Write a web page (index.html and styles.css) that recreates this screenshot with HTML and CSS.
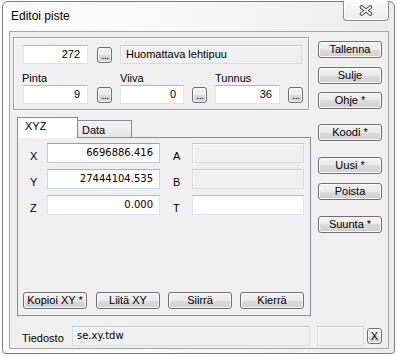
FILE: index.html
```html
<!DOCTYPE html>
<html>
<head>
<meta charset="utf-8">
<link rel="stylesheet" href="styles.css">
</head>
<body>
<div class="window">
  <div class="titlebar">
    <span class="title">Editoi piste</span>
    <div class="close">
      <svg width="14" height="11" viewBox="0 0 14 11">
        <path d="M2.5 2 L11.5 9 M11.5 2 L2.5 9" stroke="#4a4a4a" stroke-width="3.6" stroke-linecap="round" fill="none"/>
        <path d="M2.5 2 L11.5 9 M11.5 2 L2.5 9" stroke="#ffffff" stroke-width="1.6" stroke-linecap="round" fill="none"/>
      </svg>
    </div>
  </div>
  <div class="client">
    <div class="main">
      <div class="leftcol">
        <div class="groupbox">
          <div class="row1">
            <div class="input num w65">272</div>
            <div class="btn dots">...</div>
            <div class="input ro wide">Huomattava lehtipuu</div>
          </div>
          <div class="row2">
            <div class="fld">
              <span class="lbl shift">Pinta</span>
              <div class="fldrow"><div class="input num w65">9</div><div class="btn dots g9">...</div></div>
            </div>
            <div class="fld">
              <span class="lbl">Viiva</span>
              <div class="fldrow"><div class="input num w64">0</div><div class="btn dots g8">...</div></div>
            </div>
            <div class="fld">
              <span class="lbl">Tunnus</span>
              <div class="fldrow"><div class="input num w65">36</div><div class="btn dots g8">...</div></div>
            </div>
          </div>
        </div>
        <div class="tabs">
          <div class="tab active">XYZ</div>
          <div class="tab">Data</div>
        </div>
        <div class="panel">
          <div class="crow">
            <span class="clbl">X</span>
            <div class="input val cin focus">6696886.416</div>
            <span class="clbl clbl2">A</span>
            <div class="input ro cro"></div>
          </div>
          <div class="crow">
            <span class="clbl">Y</span>
            <div class="input val cin hover">27444104.535</div>
            <span class="clbl clbl2">B</span>
            <div class="input ro cro"></div>
          </div>
          <div class="crow">
            <span class="clbl">Z</span>
            <div class="input val cin">0.000</div>
            <span class="clbl clbl2">T</span>
            <div class="input cro"></div>
          </div>
          <div class="pbtns">
            <div class="btn pb">Kopioi XY *</div>
            <div class="btn pb g9">Liitä XY</div>
            <div class="btn pb g8">Siirrä</div>
            <div class="btn pb g8">Kierrä</div>
          </div>
        </div>
      </div>
      <div class="rightcol">
        <div class="btn rb m1">Tallenna</div>
        <div class="btn rb m2">Sulje</div>
        <div class="btn rb m3">Ohje *</div>
        <div class="btn rb m4">Koodi *</div>
        <div class="btn rb m5">Uusi *</div>
        <div class="btn rb m6">Poista</div>
        <div class="btn rb m7">Suunta *</div>
      </div>
    </div>
    <div class="footer">
      <span class="flbl">Tiedosto</span>
      <div class="input ro val file">se.xy.tdw</div>
      <div class="input ro file2"></div>
      <div class="btn xbtn">X</div>
    </div>
  </div>
</div>
</body>
</html>
```

FILE: styles.css
```css
html, body {
  margin: 0;
  padding: 0;
}
body {
  width: 397px;
  height: 358px;
  overflow: hidden;
  background: #ffffff;
  font-family: "Liberation Sans", Arial, sans-serif;
  font-size: 11px;
  color: #000;
}
.window {
  margin: 1px 0 0 2px;
  width: 393px;
  height: 353px;
  box-sizing: border-box;
  border: 1px solid #7d7d7d;
  border-radius: 6px 6px 4px 4px;
  background: linear-gradient(to right, #fdfdfd 0%, #f6f6f6 60%, #ececec 100%);
  display: flex;
  flex-direction: column;
}
.titlebar {
  height: 29px;
  display: flex;
  justify-content: space-between;
  align-items: flex-start;
  flex: none;
}
.title {
  font-size: 12px;
  line-height: 29px;
  padding-left: 8px;
}
.close {
  width: 46px;
  height: 20px;
  box-sizing: border-box;
  margin: -1px 5px 0 0;
  border: 1px solid #8a8a8a;
  border-top: none;
  border-radius: 0 0 4px 4px;
  background: linear-gradient(#fbfbfb, #ececec);
  box-shadow: inset 0 0 0 1px #ffffff;
  display: flex;
  align-items: center;
  justify-content: center;
}
.close svg { display: block; }
.client {
  flex: 1;
  margin: 0 5px 4px 6px;
  border: 1px solid #a8a8a8;
  background: #f0f0f0;
  display: flex;
  flex-direction: column;
}
.main {
  display: flex;
  padding: 5px 0 0 3px;
}
.leftcol {
  width: 298px;
  display: flex;
  flex-direction: column;
}
.groupbox {
  width: 296px;
  height: 73px;
  box-sizing: border-box;
  border: 1px solid #a0a0a0;
  box-shadow: inset 1px 1px 0 #ffffff, 1px 1px 0 #ffffff;
  padding: 7px 0 0 9px;
}
.input {
  box-sizing: border-box;
  height: 19px;
  background: #ffffff;
  border: 1px solid #e2e3ea;
  border-top-color: #b5b7be;
  line-height: 17px;
  padding: 0 4px;
  white-space: nowrap;
  overflow: hidden;
  flex: none;
}
.num { text-align: right; padding-right: 7px; }
.ro {
  background: #f0f0f0;
  border-color: #dcdcdc;
  border-top-color: #c8c8c8;
  box-shadow: inset 1px 1px 0 #fafafa;
}
.w65 { width: 65px; }
.w64 { width: 64px; }
.wide { width: 182px; padding-left: 5px; }
.row1 {
  display: flex;
  align-items: center;
  height: 19px;
}
.row1 .dots { margin: 0 8px 0 9px; }
.btn {
  box-sizing: border-box;
  border: 1px solid #707070;
  border-radius: 3px;
  background: linear-gradient(#f2f2f2 0%, #ebebeb 50%, #dddddd 50%, #cfcfcf 100%);
  box-shadow: inset 0 0 0 1px #fbfbfb;
  text-align: center;
  white-space: nowrap;
  flex: none;
}
.dots {
  width: 15px;
  height: 16px;
  line-height: 15px;
  font-size: 11px;
  letter-spacing: -0.5px;
  padding-left: 1px;
}
.row2 {
  display: flex;
  margin-top: 8px;
}
.fld {
  display: flex;
  flex-direction: column;
  margin-right: 8px;
}
.lbl {
  line-height: 13px;
  height: 13px;
}
.lbl.shift { margin-left: -1px; }
.fldrow {
  display: flex;
  align-items: center;
  height: 19px;
}
.g9 { margin-left: 9px; }
.g8 { margin-left: 8px; }
.tabs {
  display: flex;
  align-items: flex-end;
  height: 20px;
  margin-top: 7px;
  padding-left: 4px;
}
.tab {
  box-sizing: border-box;
  width: 54px;
  height: 17px;
  border: 1px solid #898c95;
  border-bottom: none;
  border-left: none;
  background: linear-gradient(#f3f3f3, #e6e6e6);
  padding-left: 4px;
  line-height: 18px;
}
.tab.active {
  width: 61px;
  height: 21px;
  border-left: 1px solid #898c95;
  background: #ffffff;
  margin-bottom: -1px;
  position: relative;
  z-index: 1;
  padding-left: 7px;
  line-height: 17px;
}
.panel {
  margin-left: 4px;
  width: 294px;
  height: 179px;
  box-sizing: border-box;
  border: 1px solid #898c95;
  background: #f0f0f0;
  padding: 5px 0 6px 5px;
  display: flex;
  flex-direction: column;
}
.crow {
  display: flex;
  height: 20px;
  margin-bottom: 6px;
  padding-left: 7px;
}
.clbl {
  width: 17px;
  line-height: 13px;
  margin-top: 7px;
}
.clbl2 {
  width: 19px;
  margin-left: 13px;
}
.cin { width: 113px; height: 20px; line-height: 18px; }
.cro { width: 112px; height: 20px; }
.val {
  font-family: "DejaVu Sans", Verdana, sans-serif;
  font-size: 10px;
  text-align: right;
  padding-right: 6px;
}
.focus {
  border-color: #b7d0ea;
  border-top-color: #7ea6cf;
}
.hover {
  border-color: #c5d9ee;
  border-top-color: #93b5d8;
}
.pbtns {
  display: flex;
  margin-top: auto;
}
.pb {
  width: 64px;
  height: 17px;
  line-height: 15px;
}
.rightcol {
  margin-left: 7px;
  display: flex;
  flex-direction: column;
}
.rb {
  width: 64px;
  height: 17px;
  line-height: 15px;
}
.m1 { margin-top: 4px; }
.m2 { margin-top: 9px; }
.m3 { margin-top: 8px; }
.m4 { margin-top: 15px; }
.m5 { margin-top: 16px; }
.m6 { margin-top: 9px; }
.m7 { margin-top: 16px; }
.footer {
  display: flex;
  align-items: center;
  height: 20px;
  margin-top: 10px;
  padding-left: 12px;
}
.flbl {
  width: 50px;
  line-height: 13px;
  padding-top: 5px;
}
.file {
  width: 238px;
  height: 20px;
  line-height: 18px;
  text-align: left;
  padding-left: 4px;
}
.file2 {
  width: 47px;
  height: 20px;
  margin-left: 7px;
}
.xbtn {
  width: 15px;
  height: 16px;
  line-height: 14px;
  margin-left: 3px;
}
```
